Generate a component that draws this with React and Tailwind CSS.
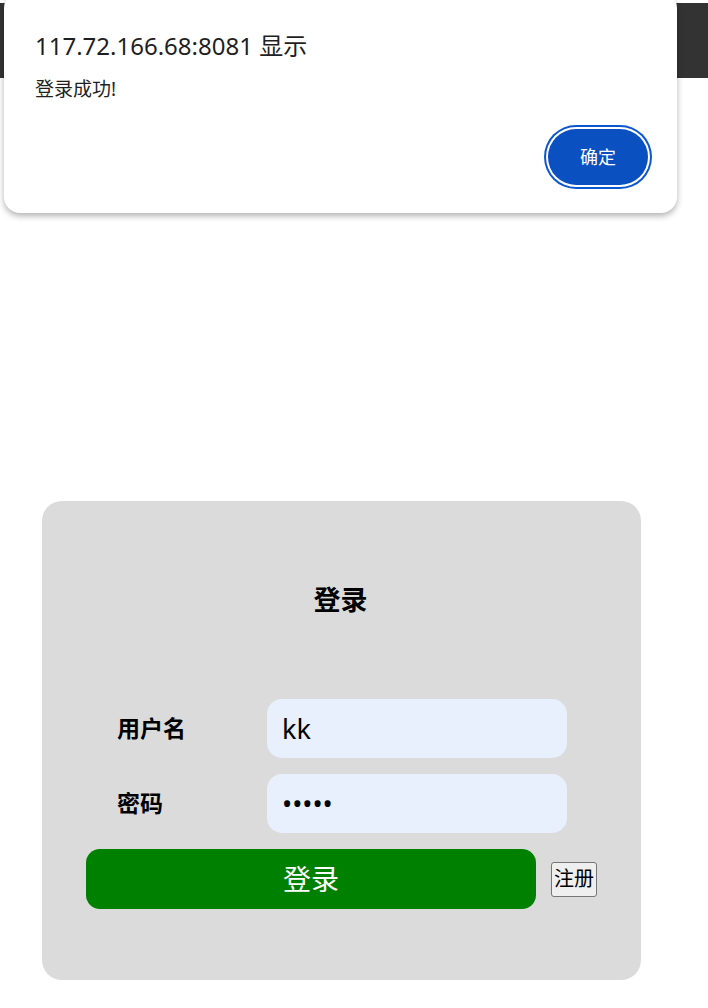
import React from "react";

const font = { fontFamily: '"Noto Sans", "Noto Sans CJK SC", sans-serif' };

const Field = ({ label, type, value }) => (
  <div className="flex items-center pl-[31px]">
    <label className="w-[150px] text-[23px] font-bold text-black">{label}</label>
    <input
      type={type}
      value={value}
      readOnly
      className="w-[300px] h-[59px] rounded-[15px] bg-[#e8f0fe] px-[15px] text-[27px] text-black outline-none"
    />
  </div>
);

const AlertDialog = () => (
  <div className="absolute left-[4px] top-[-8px] w-[673px] h-[221px] rounded-[16px] bg-white shadow-[0_3px_6px_rgba(0,0,0,0.3)]">
    <div className="pl-[31px] pt-[38px]">
      <h1 className="text-[24px] leading-[32px] text-[#1f1f1f]">117.72.166.68:8081 显示</h1>
      <p className="mt-[15px] text-[19px] leading-[24px] text-[#1f1f1f]">登录成功!</p>
    </div>
    <div className="flex justify-end pr-[29px] mt-[28px]">
      <button className="w-[100px] h-[56px] rounded-full bg-[#0b50c0] text-white text-[18px] ring-2 ring-[#0b57d0] ring-offset-2 ring-offset-white">
        确定
      </button>
    </div>
  </div>
);

export default function App() {
  return (
    <div className="relative min-h-screen bg-white" style={font}>
      <div className="h-[3px]" />
      <header className="h-[75px] bg-[#333333]" />

      <main className="pt-[423px] pb-[28px]">
        <div className="ml-[42px] w-[599px] h-[479px] rounded-[20px] bg-[#dbdbdb] pt-[81px] px-[44px]">
          <h2 className="text-center text-[27px] leading-[36px] font-bold text-black pr-[2px]">登录</h2>

          <div className="mt-[81px] flex flex-col gap-[16px]">
            <Field label="用户名" type="text" value="kk" />
            <Field label="密码" type="password" value="12345" />
            <div className="flex items-center gap-[15px]">
              <button className="w-[450px] h-[60px] rounded-[14px] bg-[#008000] text-white text-[28px]">
                登录
              </button>
              <button className="w-[46px] h-[35px] rounded-[3px] border border-[#767676] bg-[#efefef] text-[20px] leading-none text-black">
                注册
              </button>
            </div>
          </div>
        </div>
      </main>

      <AlertDialog />
    </div>
  );
}
